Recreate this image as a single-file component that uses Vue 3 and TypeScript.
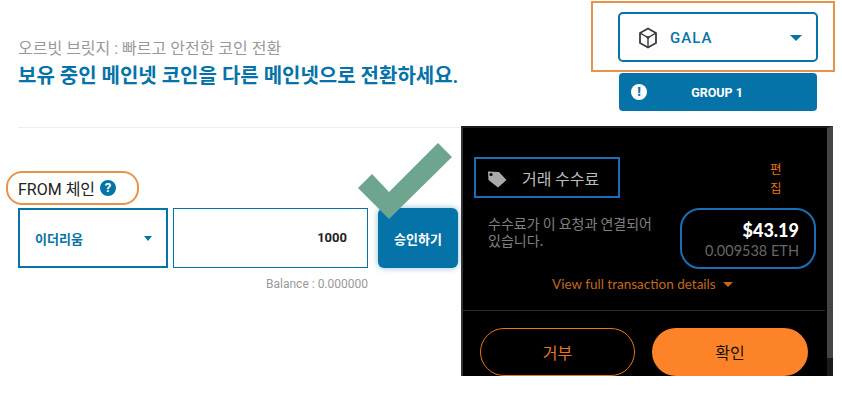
<script setup lang="ts">
const chain: string = '이더리움'
const amount: string = '1000'
</script>

<template>
  <div class="page">
    <header class="head">
      <div class="intro">
        <p class="sub">오르빗 브릿지 : 빠르고 안전한 코인 전환</p>
        <h1 class="title">보유 중인 메인넷 코인을 다른 메인넷으로 전환하세요.</h1>
      </div>
      <div class="picker">
        <div class="outline">
          <button class="token">
            <span class="cube">
              <svg width="20" height="22" viewBox="0 0 20 22" fill="none" stroke="#3a3a3a" stroke-width="1.8" stroke-linejoin="round">
                <path d="M10 1.5 18 6v10l-8 4.5L2 16V6z" />
                <path d="M2.5 6.3 10 10.5l7.5-4.2M10 10.5V20" stroke-width="1.4" />
                <path d="M7 9.2h6l-3 3z" fill="#3a3a3a" stroke="none" />
              </svg>
            </span>
            <span class="token-name">GALA</span>
            <span class="arrow big"></span>
          </button>
        </div>
        <button class="group">
          <span class="alert">!</span>
          <span class="group-name">GROUP 1</span>
        </button>
      </div>
    </header>
    <hr class="rule" />
    <section class="form">
      <div class="label">
        <span>FROM 체인</span>
        <span class="help">?</span>
      </div>
      <div class="row">
        <div class="select">
          <span>{{ chain }}</span>
          <span class="arrow"></span>
        </div>
        <div class="amount">{{ amount }}</div>
        <button class="approve">승인하기</button>
      </div>
      <p class="balance">Balance : 0.000000</p>
    </section>

    <svg class="check" width="95" height="77" viewBox="0 0 95 77">
      <path d="M0 45 14 31 31 49 80 0 94 14 31 76z" fill="#6da58e" />
    </svg>

    <aside class="wallet">
      <div class="wallet-top">
        <div class="fee-tag">
          <svg class="tag" width="20" height="17" viewBox="0 0 20 17">
            <path d="M1 0.5 12 1l7.5 8-8.5 7.5L1.5 9z" fill="#aaa" />
            <circle cx="4" cy="3.5" r="1.6" fill="#000" />
          </svg>
          <span>거래 수수료</span>
        </div>
        <div class="edit">편<br />집</div>
      </div>
      <div class="fee-row">
        <p class="fee-text">수수료가 이 요청과 연결되어 있습니다.</p>
        <div class="fee-value">
          <strong>$43.19</strong>
          <span>0.009538 ETH</span>
        </div>
      </div>
      <div class="details">View full transaction details <span class="tri"></span></div>
      <div class="actions">
        <button class="reject">거부</button>
        <button class="confirm">확인</button>
      </div>
      <div class="scroll-end"></div>
    </aside>
  </div>
</template>

<style>
html, body { background: #fff; }
</style>

<style scoped>
.page {
  position: relative;
  width: 842px;
  height: 416px;
  overflow: hidden;
  background: #fff;
  font-family: Roboto, "Noto Sans CJK KR", sans-serif;
}
button { font-family: inherit; cursor: pointer; padding: 0; }
p, h1 { margin: 0; }
.head {
  display: flex;
  justify-content: space-between;
  padding: 1px 7px 0 18px;
}
.intro { padding-top: 38px; }
.sub { font-size: 16px; line-height: 20px; color: #999; }
.title {
  margin-top: 2px;
  font-size: 20px;
  line-height: 30px;
  font-weight: 700;
  color: #0673a8;
}
.picker { display: flex; flex-direction: column; align-items: center; width: 244px; }
.outline {
  box-sizing: border-box;
  width: 244px;
  height: 71px;
  border: 2px solid #e8934a;
  padding: 9px 0 0 25px;
}
.token {
  box-sizing: border-box;
  display: flex;
  align-items: center;
  width: 200px;
  height: 50px;
  padding: 1px 14px 0 18px;
  background: #fff;
  border: 2px solid #0673a8;
  border-radius: 5px;
}
.cube { display: flex; width: 32px; }
.token-name {
  flex: 1;
  text-align: left;
  font-size: 15px;
  font-weight: 500;
  letter-spacing: 1px;
  color: #0673a8;
}
.arrow {
  width: 0;
  height: 0;
  border: 4px solid transparent;
  border-top: 5px solid #0673a8;
  border-bottom: 0;
}
.arrow.big { border-width: 6px 6px 0; }
.group {
  position: relative;
  width: 198px;
  height: 38px;
  margin: 1px 0 0 10px;
  background: #0673a8;
  border: 0;
  border-radius: 4px;
  display: flex;
  align-items: center;
  justify-content: center;
  color: #fff;
}
.alert {
  position: absolute;
  left: 12px;
  top: 11px;
  width: 16px;
  height: 16px;
  border-radius: 50%;
  background: #fff;
  color: #0673a8;
  font-size: 13px;
  line-height: 16px;
  font-weight: 900;
}
.group-name { font-size: 12.5px; font-weight: 700; padding-top: 1px; margin-left: -2px; }
.rule {
  margin: 16px 0 0 18px;
  width: 443px;
  border: 0;
  border-top: 1px solid #eee;
}
.form { padding-left: 6px; margin-top: 43px; }
.label {
  box-sizing: border-box;
  display: inline-flex;
  align-items: center;
  gap: 5px;
  width: 133px;
  height: 34px;
  padding-left: 10px;
  border: 2px solid #e8934a;
  border-radius: 16px;
  font-size: 16px;
  color: #222;
  vertical-align: top;
}
.help {
  width: 16px;
  height: 16px;
  border-radius: 50%;
  background: #0673a8;
  color: #fff;
  font-size: 13px;
  line-height: 16px;
  font-weight: 700;
  text-align: center;
}
.row {
  display: flex;
  margin: 3px 0 0 12px;
  height: 60px;
}
.select {
  box-sizing: border-box;
  display: flex;
  align-items: center;
  justify-content: space-between;
  width: 150px;
  padding: 0 14px 0 15px;
  border: 2px solid #0673a8;
  font-size: 13px;
  font-weight: 700;
  color: #0673a8;
}
.amount {
  box-sizing: border-box;
  width: 195px;
  margin-left: 5px;
  border: 1px solid #0673a8;
  padding-right: 20px;
  text-align: right;
  line-height: 58px;
  font-size: 13px;
  font-weight: 700;
  color: #222;
}
.approve {
  width: 80px;
  margin-left: 10px;
  background: #0673a8;
  color: #fff;
  border: 0;
  border-radius: 6px;
  font-size: 13px;
  font-weight: 700;
  box-shadow: 0 0 6px rgba(6, 115, 168, 0.45);
}
.balance {
  width: 362px;
  margin-top: 9px;
  text-align: right;
  font-size: 12px;
  line-height: 14px;
  color: #999;
}
.check { position: absolute; left: 358px; top: 143px; z-index: 2; }
.wallet {
  position: absolute;
  left: 461px;
  top: 126px;
  box-sizing: border-box;
  width: 372px;
  height: 250px;
  background: #000;
  border-top: 2px solid #1c1c1c;
  border-left: 2px solid #333;
  border-right: 6px solid #444;
  padding: 29px 0 0 11px;
  display: flex;
  flex-direction: column;
  font-family: "Noto Sans CJK KR", sans-serif;
}
.wallet-top { display: flex; height: 41px; }
.fee-tag {
  box-sizing: border-box;
  width: 146px;
  height: 41px;
  display: flex;
  align-items: center;
  gap: 15px;
  padding-left: 11px;
  border: 2px solid #1c6fb5;
  color: #bbb;
  font-size: 16px;
}
.tag { margin-top: 4px; }
.edit {
  margin: 2px 0 0 150px;
  font-size: 12.5px;
  line-height: 19px;
  color: #e8710f;
}
.fee-row { display: flex; margin-top: 10px; }
.fee-text {
  width: 170px;
  margin: 7px 0 0 14px;
  font-size: 14px;
  line-height: 17px;
  color: #808080;
  word-break: keep-all;
}
.fee-value {
  box-sizing: border-box;
  width: 136px;
  height: 61px;
  margin-left: 22px;
  padding: 9px 15px 0 0;
  border: 2px solid #1c6fb5;
  border-radius: 20px;
  display: flex;
  flex-direction: column;
  align-items: flex-end;
  font-family: Lato, sans-serif;
}
.fee-value strong { font-size: 18px; line-height: 22px; font-weight: 900; color: #fff; }
.fee-value span { font-size: 14.5px; line-height: 20px; color: #666; }
.details {
  margin-top: 6px;
  padding-left: 78px;
  font-family: Lato, sans-serif;
  font-size: 13.5px;
  line-height: 18px;
  color: #c4681c;
  display: flex;
  align-items: center;
  gap: 7px;
}
.tri {
  width: 0;
  height: 0;
  border: 5px solid transparent;
  border-top: 5px solid #c4681c;
  border-bottom: 0;
}
.actions {
  box-sizing: border-box;
  margin: 17px 0 0 -11px;
  padding: 17px 0 0 17px;
  border-top: 1px solid #2a2a2a;
  width: 362px;
  display: flex;
  gap: 17px;
}
.reject, .confirm {
  box-sizing: border-box;
  width: 155px;
  height: 48px;
  border-radius: 24px;
  font-family: "Noto Sans CJK KR", sans-serif;
  font-size: 16px;
}
.reject { background: #000; border: 1px solid #e8761c; color: #e8761c; }
.confirm { background: #fd8329; border: 0; color: #111; width: 156px; }
.scroll-end {
  position: absolute;
  right: -6px;
  bottom: 0;
  width: 6px;
  height: 18px;
  background: #1a1a1a;
}
</style>
